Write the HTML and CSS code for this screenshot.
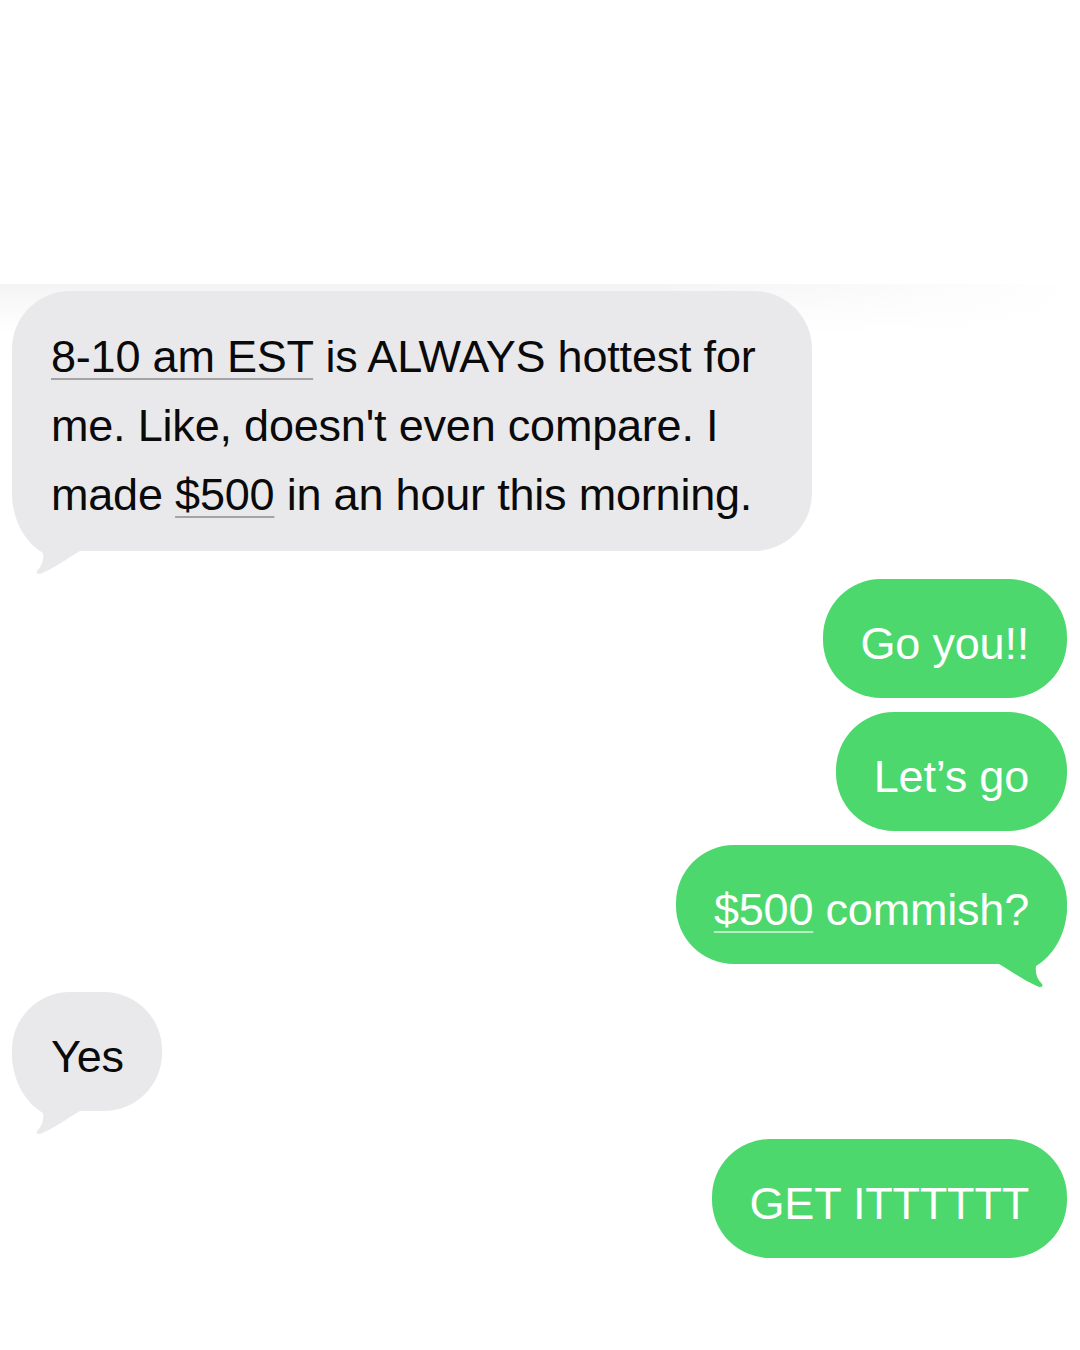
FILE: index.html
```html
<!DOCTYPE html>
<html lang="en">
<head>
<meta charset="utf-8">
<title>Messages</title>
<link rel="stylesheet" href="styles.css">
</head>
<body>
<div class="thread">
  <div class="bubble in first">
    <p class="text"><span class="link">8-10 am EST</span> is ALWAYS hottest for me. Like, doesn't even compare. I made <span class="link">$500</span> in an hour this morning.</p>
    <svg class="tail" viewBox="0 0 80 80" width="80" height="80" aria-hidden="true"><path d="M0 0 C1 26 14 47 31 57 C32 64 30 70 25 75 C23.5 77 25.5 79 29 77.5 C43 72 54 63 68 55 L68 0 Z"/></svg>
  </div>

  <div class="bubble out group-start">
    <p class="text">Go you!!</p>
  </div>
  <div class="bubble out">
    <p class="text">Let’s go</p>
  </div>
  <div class="bubble out">
    <p class="text"><span class="link">$500</span> commish?</p>
    <svg class="tail" viewBox="0 0 80 80" width="80" height="80" aria-hidden="true"><path d="M0 0 C1 26 14 47 31 57 C32 64 30 70 25 75 C23.5 77 25.5 79 29 77.5 C43 72 54 63 68 55 L68 0 Z"/></svg>
  </div>

  <div class="bubble in group-start">
    <p class="text">Yes</p>
    <svg class="tail" viewBox="0 0 80 80" width="80" height="80" aria-hidden="true"><path d="M0 0 C1 26 14 47 31 57 C32 64 30 70 25 75 C23.5 77 25.5 79 29 77.5 C43 72 54 63 68 55 L68 0 Z"/></svg>
  </div>

  <div class="bubble out group-start">
    <p class="text">GET ITTTTTT</p>
  </div>
</div>
</body>
</html>
```
FILE: styles.css
```css
html, body {
  margin: 0;
  padding: 0;
}

body {
  width: 1080px;
  height: 1350px;
  overflow: hidden;
  font-family: "Liberation Sans", Arial, Helvetica, sans-serif;
  background:
    linear-gradient(to right, rgba(255,255,255,0) 0%, rgba(255,255,255,0) 60%, #fff 100%) 0 284px / 100% 50px no-repeat,
    linear-gradient(to bottom, #f4f4f4 0, #fbfbfb 30px, #fff 50px) 0 284px / 100% 50px no-repeat,
    #fff;
}

.thread {
  display: flex;
  flex-direction: column;
  gap: 14px;
  padding: 291px 13px 0 12px;
}

.bubble {
  position: relative;
  box-sizing: border-box;
  padding: 30px 38px 20px 38px;
  border-radius: 58px;
}

.bubble .text {
  position: relative;
  z-index: 1;
  margin: 0;
  font-size: 45px;
  line-height: 69px;
  letter-spacing: -0.2px;
}

.in {
  align-self: flex-start;
  background: #e9e9eb;
  color: #0a0a0a;
  padding-left: 39px;
}

.out {
  align-self: flex-end;
  background: #4cd86d;
  color: #ffffff;
}

.first {
  width: 800px;
  padding-top: 31px;
  padding-bottom: 22px;
}

.group-start {
  margin-top: 14px;
}

.link {
  text-decoration: underline;
  text-decoration-thickness: 2px;
  text-underline-offset: 6px;
}

.in .link {
  text-decoration-color: #a3a3a6;
}

.out .link {
  text-decoration-color: rgba(255, 255, 255, 0.6);
}

.tail {
  position: absolute;
  bottom: -25px;
  width: 80px;
  height: 80px;
}

.in .tail {
  left: 0;
  fill: #e9e9eb;
}

.out .tail {
  right: 0;
  fill: #4cd86d;
  transform: scaleX(-1);
}
```
